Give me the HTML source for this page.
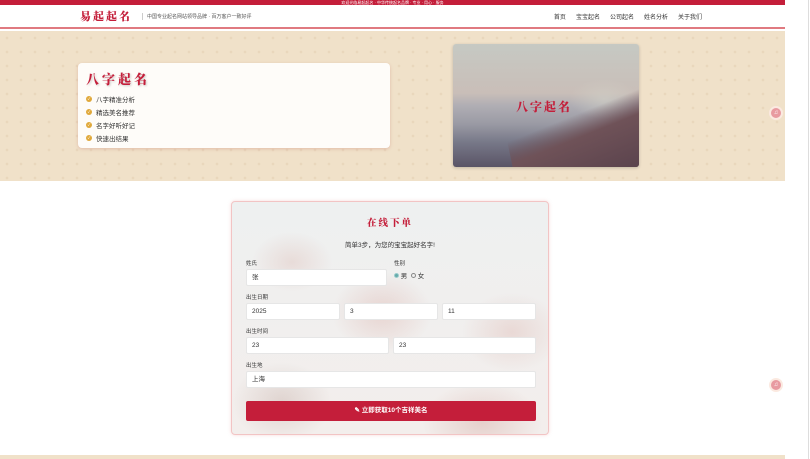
<!DOCTYPE html>
<html><head><meta charset="utf-8">
<style>
*{margin:0;padding:0;box-sizing:border-box}
body{width:810px;height:459px;overflow:hidden;background:#fff;font-family:"Liberation Sans","Noto Sans CJK SC",sans-serif;color:#333;position:relative}
.wrap{position:absolute;left:0;top:0;width:785px;height:459px;background:#fff}
.top{height:5px;background:#c41e3a;color:#fff;font-size:4px;text-align:center;line-height:5px;overflow:hidden}
.nav{height:24px;display:flex;align-items:center;padding-left:80px;border-bottom:2px solid #e07a80}
.logo{font-family:"Noto Serif CJK SC",serif;font-weight:900;color:#c41e3a;font-size:11px;letter-spacing:2px}
.slogan{font-size:5px;color:#555;margin-left:10px;padding-left:4px;border-left:1px solid #ccc}
.menu{margin-left:auto;margin-right:83px;display:flex;gap:10px;font-size:6px;color:#333}
.hero{position:absolute;top:31px;left:0;width:785px;height:150px;background:#f0e1c9;background-image:radial-gradient(circle,rgba(200,170,130,.18) 1.2px,transparent 1.5px);background-size:14px 14px}
.card{position:absolute;left:78px;top:32px;width:312px;height:85px;background:#fefcf9;border-radius:4px;box-shadow:0 1px 3px rgba(200,120,110,.35);padding:6px 8px}
.card h1{font-family:"Noto Serif CJK SC",serif;font-weight:900;color:#c41e3a;font-size:13px;letter-spacing:3px;text-shadow:1px 1px 2px rgba(0,0,0,.2);margin-bottom:4px}
.card li{list-style:none;font-size:6.5px;color:#333;height:13px;display:flex;align-items:center}
.card li:before{content:"✓";color:#fff;font-size:4px;line-height:6px;text-align:center;width:6px;height:6px;border-radius:50%;background:#e0a83a;margin-right:4px}
.photo{position:absolute;left:453px;top:13px;width:186px;height:123px;border-radius:3px;overflow:hidden;box-shadow:0 1px 3px rgba(0,0,0,.2);background:linear-gradient(180deg,#c6c9c3 0%,#c9beb8 40%,#b0aeb4 50%,#9a9aa4 65%,#777888 80%,#5a5466 100%)}
.photo .beach{position:absolute;right:-20px;bottom:-20px;width:150px;height:90px;background:linear-gradient(170deg,transparent 25%,#6f5258 45%,#553f4a 100%);transform:rotate(-12deg)}
.photo .haze{position:absolute;right:0;top:35px;width:70px;height:40px;background:radial-gradient(ellipse,rgba(210,210,200,.6),transparent 70%)}
.photo span{position:absolute;left:63px;top:54px;font-family:"Noto Serif CJK SC",serif;font-weight:900;color:#c41e3a;font-size:12px;letter-spacing:2px}
.form{position:absolute;left:231px;top:201px;width:318px;height:234px;border:1px solid #f2c4c4;border-radius:4px;background:linear-gradient(180deg,#eef0f0,#f3eeec);overflow:hidden;box-shadow:0 0 3px rgba(240,180,180,.5)}
.form .bg{position:absolute;inset:0;background:radial-gradient(ellipse 40px 30px at 60px 60px,rgba(210,160,150,.25),transparent),radial-gradient(ellipse 50px 40px at 150px 110px,rgba(210,150,140,.3),transparent),radial-gradient(ellipse 50px 40px at 280px 130px,rgba(210,150,140,.25),transparent),radial-gradient(ellipse 60px 40px at 250px 220px,rgba(200,140,130,.3),transparent),radial-gradient(ellipse 50px 40px at 50px 200px,rgba(180,150,140,.3),transparent)}
.in{position:absolute;left:0;top:0;width:100%;height:100%}
.t{position:absolute;width:100%;text-align:center;top:13px;font-family:"Noto Serif CJK SC",serif;font-weight:900;color:#c41e3a;font-size:9.5px;letter-spacing:2px}
.s{position:absolute;width:100%;text-align:center;top:37px;font-size:6.5px;color:#333}
.l{position:absolute;font-size:5.5px;color:#333}
.b{position:absolute;background:#fff;border:1px solid #e6e6e6;border-radius:2px;height:17px;font-size:6.5px;line-height:15px;padding-left:5px;color:#333}
.btn{position:absolute;left:14px;top:199px;width:290px;height:20px;background:#c41e3a;border-radius:2px;color:#fff;font-size:6.5px;font-weight:bold;text-align:center;line-height:20px}
.fl{position:absolute;left:769px;width:14px;height:14px;border-radius:50%;background:#e89aa0;border:2px solid #fbe9e0;color:#fff;font-size:6px;text-align:center;line-height:10px}
.foot{position:absolute;left:0;top:455px;width:785px;height:4px;background:#f0e1c9}
.sb{position:absolute;left:808px;top:0;width:1px;height:459px;background:#ddd}
</style></head><body>
<div class="wrap">
<div class="top">欢迎光临易起起名 · 中华传统起名品牌 · 专业 · 用心 · 服务</div>
<div class="nav"><span class="logo">易起起名</span><span class="slogan">中国专业起名网站领导品牌 · 百万客户一致好评</span>
<div class="menu"><span>首页</span><span>宝宝起名</span><span>公司起名</span><span>姓名分析</span><span>关于我们</span></div></div>
<div class="hero">
<div class="card"><h1>八字起名</h1><ul><li>八字精准分析</li><li>精选美名推荐</li><li>名字好听好记</li><li>快速出结果</li></ul></div>
<div class="photo"><div class="haze"></div><div class="beach"></div><span>八字起名</span></div>
</div>
<div class="form"><div class="bg"></div><div class="in">
<div class="t">在线下单</div>
<div class="s">简单3步，为您的宝宝起好名字!</div>
<div class="l" style="left:14px;top:57px">姓氏</div>
<div class="b" style="left:14px;top:67px;width:141px">张</div>
<div class="l" style="left:162px;top:57px">性别</div>
<div class="l" style="left:162px;top:68px;font-size:6.5px"><span style="display:inline-block;width:5px;height:5px;border-radius:50%;background:#6aa;border:1px solid #9cc"></span> 男 &nbsp;<span style="display:inline-block;width:5px;height:5px;border-radius:50%;border:1px solid #888"></span> 女</div>
<div class="l" style="left:14px;top:91px">出生日期</div>
<div class="b" style="left:14px;top:101px;width:94px">2025</div>
<div class="b" style="left:112px;top:101px;width:94px">3</div>
<div class="b" style="left:210px;top:101px;width:94px">11</div>
<div class="l" style="left:14px;top:125px">出生时间</div>
<div class="b" style="left:14px;top:135px;width:143px">23</div>
<div class="b" style="left:161px;top:135px;width:143px">23</div>
<div class="l" style="left:14px;top:159px">出生地</div>
<div class="b" style="left:14px;top:169px;width:290px">上海</div>
<div class="btn">✎ 立即获取10个吉祥美名</div>
</div></div>
<div class="foot"></div>
</div>
<div class="fl" style="top:106px">♫</div>
<div class="fl" style="top:378px">♫</div>
<div class="sb"></div>
</body></html>
